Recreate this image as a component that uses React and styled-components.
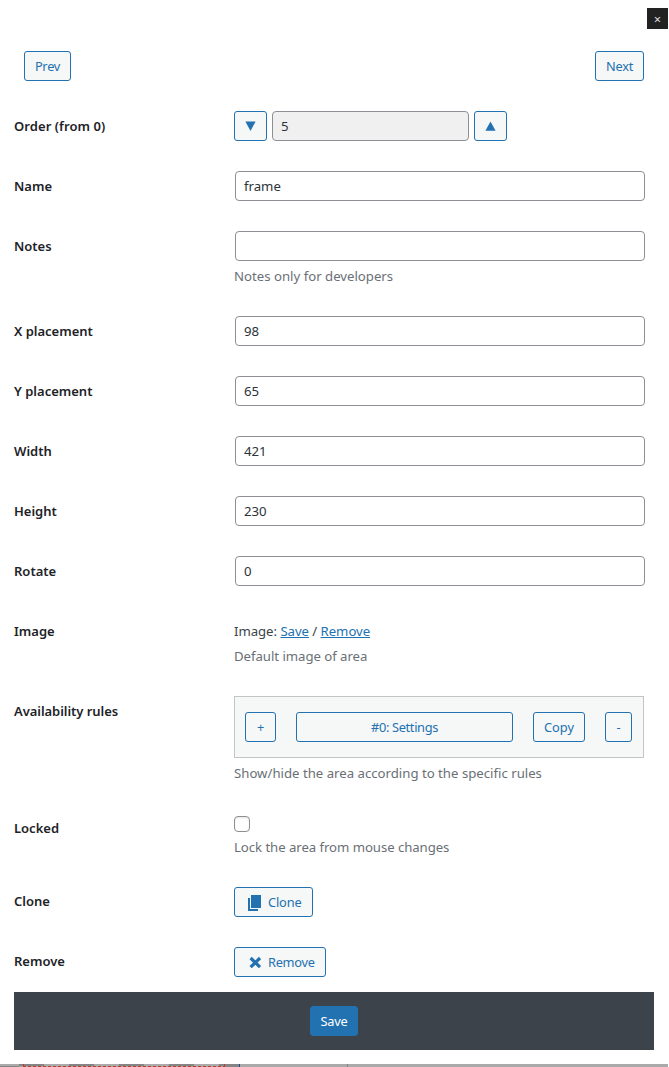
import React from "react";
import styled, { createGlobalStyle } from "styled-components";

const Global = createGlobalStyle`
  *, *::before, *::after { box-sizing: border-box; }
  html, body { margin: 0; background: #fff; }
  body, button, input {
    font-family: "Noto Sans", "Open Sans", sans-serif;
    font-size: 13px;
    color: #3c434a;
  }
  body { overflow: hidden; }
`;

const Panel = styled.main`
  display: flex;
  flex-direction: column;
  width: 669px;
  height: 1067px;
  background: #fff;
`;

const TopBar = styled.header`
  display: flex;
  justify-content: flex-end;
  padding: 8px 1px 0 0;
  height: 29px;
`;

const CloseButton = styled.button`
  width: 21px;
  height: 21px;
  padding: 2px 0 0;
  border: 0;
  background: #222;
  color: #ddd;
  font-size: 13px;
  line-height: 19px;
  text-align: center;
`;

const Pager = styled.nav`
  display: flex;
  justify-content: space-between;
  height: 67px;
  padding: 22px 25px 0 24px;
`;

const Button = styled.button`
  display: flex;
  align-items: center;
  justify-content: center;
  flex: none;
  width: ${(p) => p.$w}px;
  height: 30px;
  padding: 0;
  border: 1px solid #2271b1;
  border-radius: 3px;
  background: ${(p) => (p.$primary ? "#2271b1" : "#f6f7f7")};
  color: ${(p) => (p.$primary ? "#fff" : "#2271b1")};
  font-size: 12.8px;
  line-height: 28px;
  letter-spacing: ${(p) => p.$track ?? -0.25}px;
  white-space: nowrap;
`;

const IconButton = styled(Button)`
  justify-content: flex-start;
  gap: 6px;
  padding-left: 13px;
`;

const Row = styled.section`
  display: flex;
  flex: none;
  height: ${(p) => p.$h || 60}px;
  padding-left: 14px;
`;

const Label = styled.div`
  width: 220px;
  padding-top: ${(p) => p.$top || 20}px;
  color: #1d2327;
  font-size: 13px;
  font-weight: 600;
  line-height: 21px;
  letter-spacing: ${(p) => p.$track ?? 0}px;
`;

const Cell = styled.div`
  width: 411px;
  padding-top: ${(p) => p.$top || 15}px;
`;

const Input = styled.input`
  display: block;
  width: 410px;
  height: 30px;
  margin: 0 0 0 1px;
  padding: 0 8px;
  border: 1px solid #8c8f94;
  border-radius: 4px;
  background: #fff;
  color: #2c3338;
  font-size: 13.2px;
  outline: 0;
`;

const OrderInput = styled(Input)`
  width: 197px;
  margin: 0;
  background: #f0f0f0;
`;

const OrderControl = styled.div`
  display: flex;
  gap: 5px;
`;

const Hint = styled.p`
  margin: 5px 0 0;
  color: #6a6f76;
  font-size: 13.2px;
  line-height: 20px;
  letter-spacing: ${(p) => p.$track ?? 0}px;
  white-space: nowrap;
`;

const ImageLinks = styled.div`
  height: 20px;
  margin-top: 5px;
  font-size: 13.2px;
  line-height: 20px;
  letter-spacing: -0.05px;
`;

const Link = styled.a`
  color: #2271b1;
  text-decoration: underline;
`;

const Rules = styled.div`
  display: flex;
  gap: 20px;
  width: 410px;
  height: 62px;
  padding: 15px 10px;
  border: 1px solid #c3c4c7;
  background: #f6f7f7;
`;

const Checkbox = styled.input`
  appearance: none;
  display: block;
  width: 16px;
  height: 16px;
  margin: 0;
  border: 1px solid #8c8f94;
  border-radius: 4px;
  background: #fff;
  box-shadow: inset 0 1px 2px rgba(0, 0, 0, 0.1);
`;

const Footer = styled.footer`
  display: flex;
  flex: none;
  align-items: center;
  justify-content: center;
  width: 640px;
  height: 58px;
  margin-left: 14px;
  background: #3c434a;
`;

const Canvas = styled.svg`
  display: block;
  flex: none;
  margin-top: 14px;
`;

const Triangle = ({ up }) => (
  <svg width="11" height="10" viewBox="0 0 11 10" fill="#2271b1">
    <path d={up ? "M5.5 0.5L10.6 9.8H0.4Z" : "M0.4 0.6H10.6L5.5 9.9Z"} />
  </svg>
);

const CopyIcon = () => (
  <svg width="14" height="17" viewBox="0 0 14 17" fill="#2271b1">
    <path d="M3 1H13V14H3ZM0 4H2V15H10V17H0Z" />
  </svg>
);

const CrossIcon = () => (
  <svg width="14" height="14" viewBox="0 0 14 14" stroke="#2271b1" strokeWidth="3.2">
    <path d="M2.6 3L12 12.2M12 3L2.6 12.2" />
  </svg>
);

const fields = [
  ["X placement", "98"],
  ["Y placement", "65"],
  ["Width", "421"],
  ["Height", "230"],
  ["Rotate", "0"],
];

const Field = ({ label, value, hint }) => (
  <Row $h={hint ? 85 : 60}>
    <Label>{label}</Label>
    <Cell>
      <Input defaultValue={value} />
      {hint && <Hint>{hint}</Hint>}
    </Cell>
  </Row>
);

export default function App() {
  return (
    <Panel>
      <Global />
      <TopBar>
        <CloseButton>×</CloseButton>
      </TopBar>
      <Pager>
        <Button $w={47}>Prev</Button>
        <Button $w={49}>Next</Button>
      </Pager>
      <Row>
        <Label $track={0.07}>Order (from 0)</Label>
        <Cell>
          <OrderControl>
            <Button $w={33}><Triangle /></Button>
            <OrderInput defaultValue="5" readOnly />
            <Button $w={33}><Triangle up /></Button>
          </OrderControl>
        </Cell>
      </Row>
      <Field label="Name" value="frame" />
      <Field label="Notes" value="" hint="Notes only for developers" />
      {fields.map(([label, value]) => (
        <Field key={label} label={label} value={value} />
      ))}
      <Row $h={80}>
        <Label>Image</Label>
        <Cell>
          <ImageLinks>
            Image: <Link>Save</Link> / <Link>Remove</Link>
          </ImageLinks>
          <Hint $track={-0.04}>Default image of area</Hint>
        </Cell>
      </Row>
      <Row $h={117}>
        <Label $track={-0.05}>Availability rules</Label>
        <Cell>
          <Rules>
            <Button $w={31}>+</Button>
            <Button $w={217} $track={-0.33}>#0: Settings</Button>
            <Button $w={52} $track={0}>Copy</Button>
            <Button $w={27}>-</Button>
          </Rules>
          <Hint>Show/hide the area according to the specific rules</Hint>
        </Cell>
      </Row>
      <Row $h={74}>
        <Label>Locked</Label>
        <Cell $top={18}>
          <Checkbox type="checkbox" />
          <Hint $track={-0.06}>Lock the area from mouse changes</Hint>
        </Cell>
      </Row>
      <Row>
        <Label $top={19}>Clone</Label>
        <Cell>
          <IconButton $w={79} $track={-0.15}><CopyIcon />Clone</IconButton>
        </Cell>
      </Row>
      <Row>
        <Label $top={19}>Remove</Label>
        <Cell>
          <IconButton $w={92} $track={-0.3}><CrossIcon />Remove</IconButton>
        </Cell>
      </Row>
      <Footer>
        <Button $w={48} $primary>Save</Button>
      </Footer>
      <Canvas width="668" height="3" viewBox="0 0 668 3" shapeRendering="crispEdges">
        <path fill="#aaa" d="M0 0H668V3H0Z" />
        <path fill="#858585" d="M0 2H19V3H0ZM225 2H239V3H225ZM19 0H44V2H19ZM69 0H94V2H69ZM119 0H144V2H119ZM169 0H194V2H169ZM219 0H239V2H219Z" />
        <path fill="none" stroke="#c0392b" strokeDasharray="3 2" d="M23 2.5H225" />
        <path fill="#c0392b" d="M23 0H24V3H23ZM224 0H225V3H224Z" />
        <path fill="#1d4f8c" d="M239 0H240V3H239Z" />
        <path fill="#858585" d="M347 0H348V3H347Z" />
      </Canvas>
    </Panel>
  );
}
